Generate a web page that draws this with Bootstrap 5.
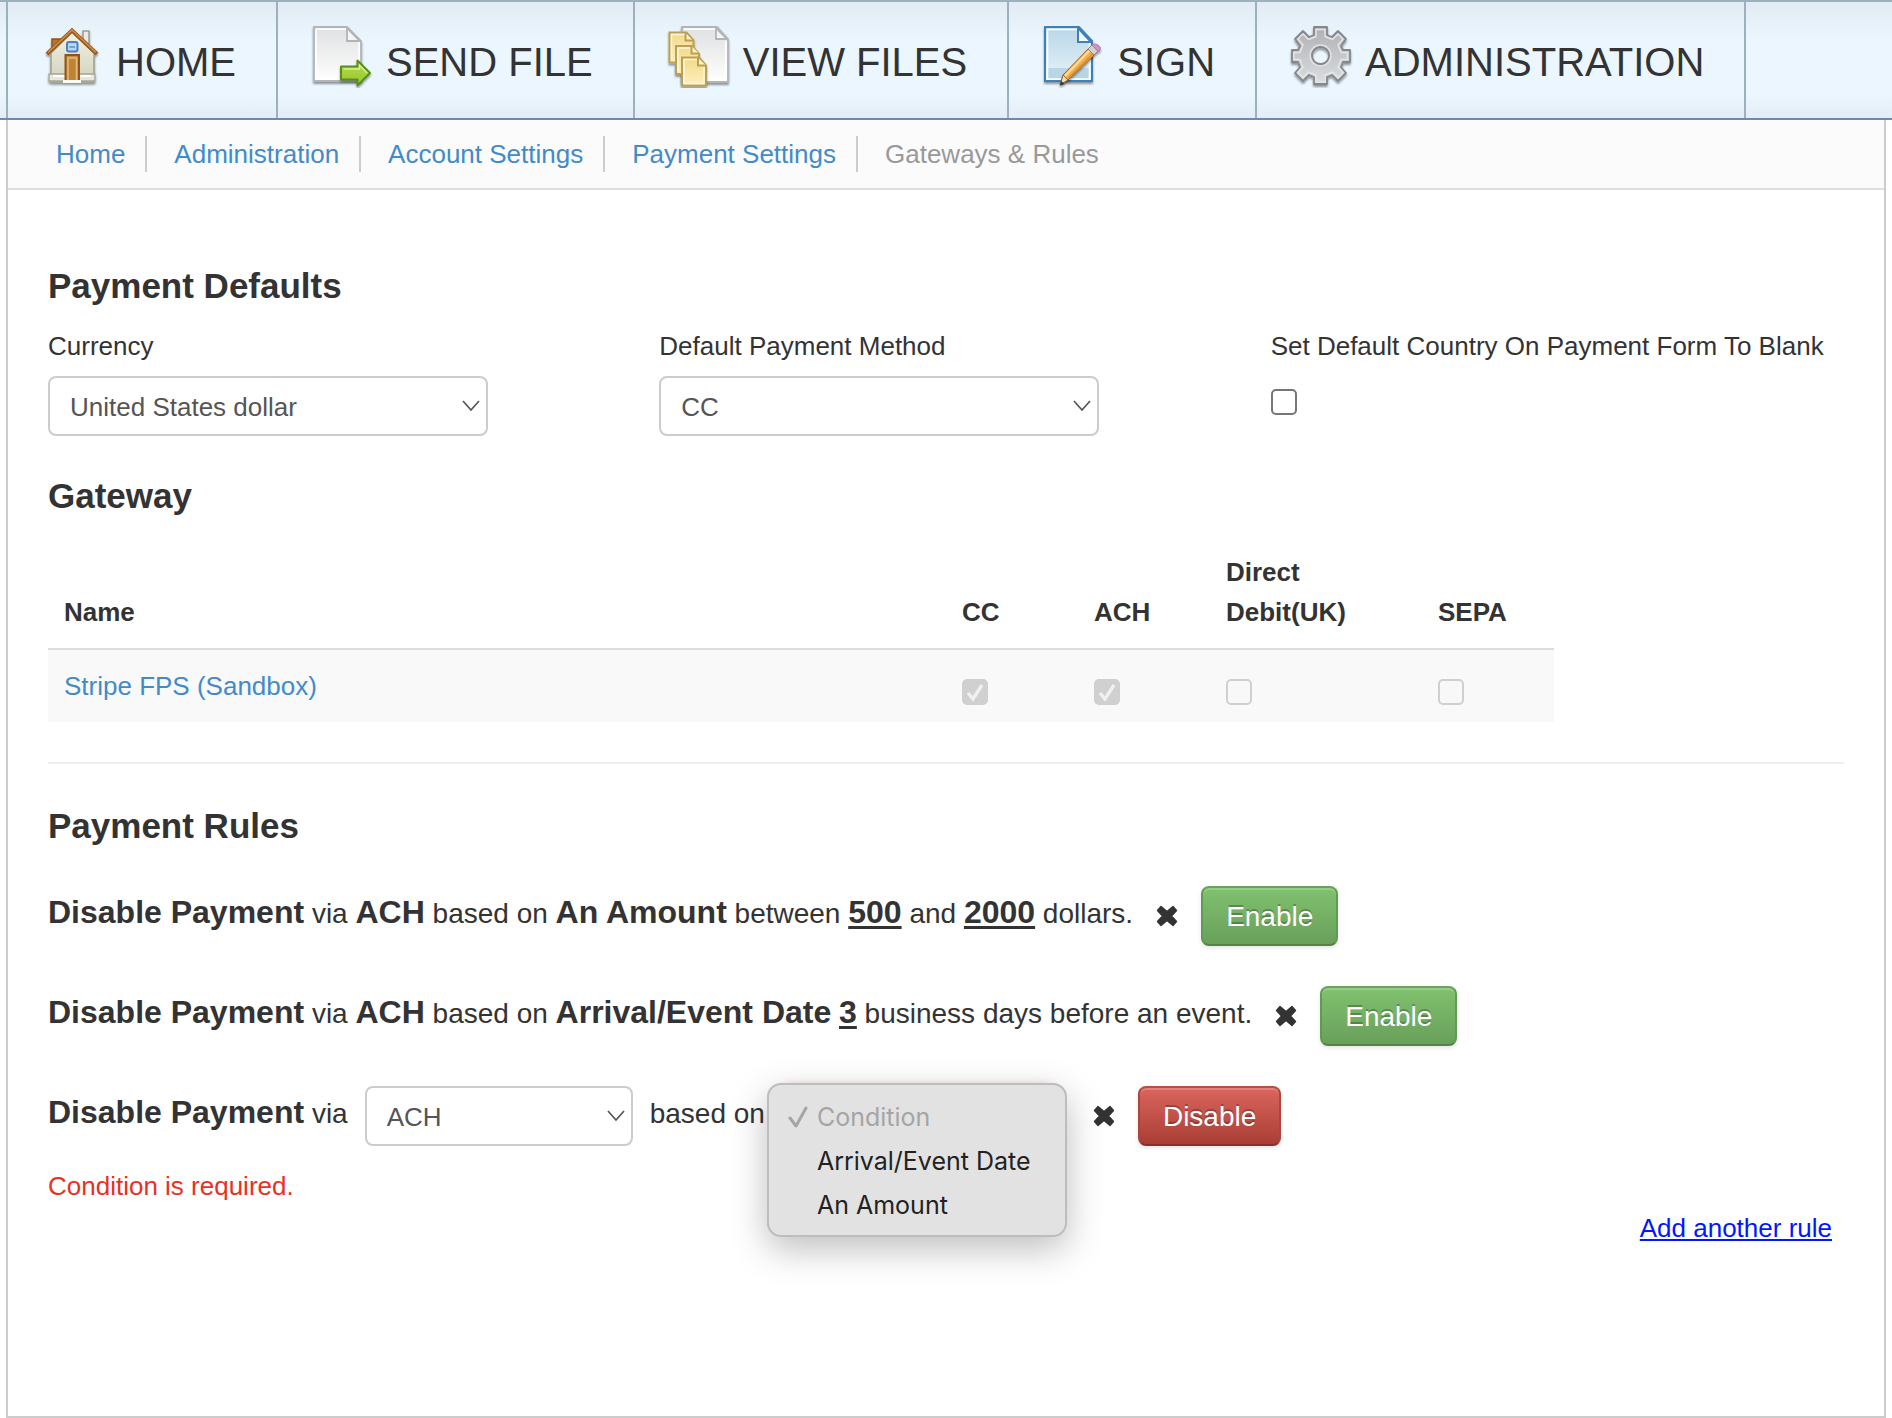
<!DOCTYPE html>
<html lang="en">
<head>
<meta charset="utf-8">
<meta name="viewport" content="width=device-width, initial-scale=1">
<title>Gateways &amp; Rules</title>
<link href="https://cdn.jsdelivr.net/npm/bootstrap@5.3.0/dist/css/bootstrap.min.css" rel="stylesheet">
<style>
  body { font-family: "Liberation Sans", Arial, sans-serif; font-size: 26px; line-height: 40px; color: #333; background: #fff; }
  a { color: #428bca; text-decoration: none; }

  .main-nav { border-top: 2px solid #9db0bd; border-bottom: 2px solid #6d8bb0; padding-left: 6px;
    background: linear-gradient(#e0ebf4 0, #ebf6ff 34%, #ebf6ff 80%, #e2edf5 100%); }
  .main-nav .nav-item { border-right: 2px solid #9db0bd; }
  .main-nav .nav-item:first-child { border-left: 2px solid #9db0bd; }
  .main-nav .nav-link { gap: 12px; padding: 22px 40px 18px 32px; color: #333; font-size: 40px; line-height: 76px; text-transform: uppercase; }
  .main-nav svg { width: 64px; height: 64px; flex: none; }

  .frame { margin: 0 6px; border: 2px solid #ccc; border-top: 0; }
  .crumbs { background: #fbfbfb; border-bottom: 2px solid #ddd; padding: 16px 48px; }
  .crumbs .breadcrumb { --bs-breadcrumb-font-size: 26px; }
  .crumbs .breadcrumb-item { padding: 0 20px 0 0; line-height: 36px; }
  .crumbs .breadcrumb-item + .breadcrumb-item { border-left: 2px solid #ccc; padding-left: 27px; }
  .crumbs .breadcrumb-item + .breadcrumb-item::before { display: none; }
  .crumbs .active { color: #999; }

  .page { padding: 76px 40px 80px; }
  h2 { font-size: 35px; line-height: 40px; font-weight: 700; margin: 0 0 20px; }
  .defaults { --bs-gutter-x: 38px; margin-bottom: 40px; }
  .defaults label { display: block; margin-bottom: 10px; }
  .form-select { height: 60px; padding: 2px 40px 0 20px; border: 2px solid #ccc; border-radius: 8px; color: #555; font-size: 26px; line-height: 54px;
    background-image: url("data:image/svg+xml,%3Csvg xmlns='http://www.w3.org/2000/svg' viewBox='0 0 18 12'%3E%3Cpath d='M1 1l8 9 8-9' fill='none' stroke='%23555' stroke-width='1.700'/%3E%3C/svg%3E");
    background-size: 18px 12px; background-position: right 6px center; }
  .wide-select { width: 440px; max-width: 100%; }
  .form-check-input { display: block; width: 26px; height: 26px; margin: 13px 0 0; border: 2px solid #767676; }
  .form-check-input[type=checkbox] { border-radius: 5px; }
  .form-check-input:disabled { opacity: 1; border-color: #d0d0d0; background-color: #f8f8f8; }
  .form-check-input:checked:disabled { background-color: #d0d0d0; background-size: 26px 26px;
    background-image: url("data:image/svg+xml,%3Csvg xmlns='http://www.w3.org/2000/svg' viewBox='0 0 26 26'%3E%3Cpath d='M6 14l5 6 9-14' fill='none' stroke='%23f0f0f0' stroke-width='3.4'/%3E%3C/svg%3E"); }

  .gateways { width: 84%; max-width: 1506px; margin: 0 0 40px; table-layout: fixed; color: #333; border: 0; }
  .gateways > :not(caption) > * > * { padding: 16px; border: 0; color: #333; background: none; box-shadow: none; }
  .gateways thead th { vertical-align: bottom; border-bottom: 2px solid #ddd; }
  .gateways tbody td { background: #f9f9f9; }
  .gateways .narrow { width: 132px; }
  .gateways .medium { width: 212px; }
  hr.divider { border-top: 2px solid #eee; opacity: 1; margin: 0 0 42px; }

  .rules { padding-top: 20px; font-size: 28px; line-height: 52px; }
  .rule { gap: 23px; margin-bottom: 40px; }
  .rule strong { font-size: 32px; }
  .rule u { text-decoration-thickness: 3px; text-underline-offset: 3px; }
  .rule:last-child { margin-bottom: 20px; }
  .rule-fields { gap: 17px; }
  .method-select { width: 268px; }
  .condition { width: 288px; }
  .condition .form-select { width: 272px; border-color: #e09a96; box-shadow: 0 0 8px #e8b4b0; }
  .condition .dropdown-menu { left: 0; top: -3px; width: 300px; margin-left: -15px; padding: 10px 0 8px; border: 2px solid #bdbdbd; border-radius: 14px; background: #e2e2e2;
    box-shadow: 0 12px 36px rgba(0,0,0,.26); font-family: Inter, sans-serif; font-size: 25px; line-height: 44px; }
  .condition .dropdown-item { padding: 0 16px 0 19px; gap: 8px; color: #222; line-height: 44px; }
  .condition .dropdown-item:disabled { color: #a5a5a5; }
  .condition .tick { width: 21px; height: 24px; flex: none; }
  .remove { padding: 0; border: 0; background: none; line-height: 0; color: #333; }
  .remove svg { width: 22px; height: 22px; }
  .rule .btn { height: 60px; padding: 2px 23px 0; border-width: 2px; border-radius: 8px; font-size: 28px; line-height: 54px; color: #fff;
    text-shadow: 0 -2px 0 rgba(0,0,0,.25); box-shadow: inset 0 2px 0 rgba(255,255,255,.2), 0 2px 4px rgba(0,0,0,.1); }
  .btn-enable { background: linear-gradient(#80c16e, #69a05b); border-color: #68a55a #5f9b52 #528347; }
  .btn-disable { background: linear-gradient(#da655d, #a93e35); border-color: #b84f47 #a8463f #8b3029; }
  .error-text { color: #e8311f; margin: 0 0 2px; }
  .add-rule { padding-right: 12px; }
  .add-rule a { color: #0017ff; text-decoration: underline; text-decoration-thickness: 2px; text-underline-offset: 2px; }
</style>
<script src="https://cdn.jsdelivr.net/npm/bootstrap@5.3.0/dist/js/bootstrap.bundle.min.js"></script>
</head>
<body class="d-flex flex-column min-vh-100">

<svg width="0" height="0" class="position-absolute" aria-hidden="true">
  <defs>
    <linearGradient id="paper" x2="0" y2="1"><stop offset="0" stop-color="#dfe0e1"/><stop offset="1" stop-color="#fff"/></linearGradient>
    <linearGradient id="yellow" x2="0" y2="1"><stop offset="0" stop-color="#f3d989"/><stop offset="1" stop-color="#fdf0c0"/></linearGradient>
    <linearGradient id="blue" x2="0" y2="1"><stop offset="0" stop-color="#b9d6e6"/><stop offset="1" stop-color="#e6f3fb"/></linearGradient>
    <linearGradient id="green" x2="0" y2="1"><stop offset="0" stop-color="#b9dc4c"/><stop offset="1" stop-color="#93c62d"/></linearGradient>
    <linearGradient id="metal" x2="0" y2="1"><stop offset="0" stop-color="#aeb0b3"/><stop offset="1" stop-color="#dcdddf"/></linearGradient>
    <linearGradient id="wall" x2="0" y2="1"><stop offset="0" stop-color="#f3f1e6"/><stop offset="1" stop-color="#cfd2bb"/></linearGradient>
    <filter id="drop" x="-20%" y="-20%" width="140%" height="150%"><feDropShadow dx="0" dy="2" stdDeviation="1.2" flood-opacity=".4"/></filter>
    <symbol id="cross" viewBox="0 0 22 22"><path d="M5 1.500L11 6.500 17 1.500 20.500 5.500 15.500 11 20.500 16.500 17 20.500 11 15.500 5 20.500 1.500 16.500 6.500 11 1.500 5.500z" fill="currentColor" stroke="currentColor" stroke-width="1.400" stroke-linejoin="round"/></symbol>
  </defs>
</svg>

<nav class="main-nav" aria-label="Main">
  <ul class="nav">
    <li class="nav-item"><a class="nav-link d-flex align-items-start" href="#">
      <svg viewBox="0 0 64 64" aria-hidden="true"><g filter="url(#drop)">
        <path d="M12 15h10v14H12z" fill="#b97425" stroke="#8e5417" stroke-width="1.500"/>
        <path d="M43 7h6v18h-6z" fill="#eceadf" stroke="#9b9c90" stroke-width="1.500"/>
        <path d="M32 8L11 29v29h43V29z" fill="url(#wall)" stroke="#9fa08e" stroke-width="1.500"/>
        <path d="M9 50h46v7H9z" fill="#e6e6dc" stroke="#a6a798" stroke-width="1.300"/>
        <path d="M13 52h38" stroke="#fff" stroke-width="2"/>
        <path d="M7 30L32 6.500 57 30" fill="none" stroke="#965a1e" stroke-width="4"/>
        <path d="M8 28.500L32 6 56 28.500" fill="none" stroke="#cf8f45" stroke-width="1.600"/>
        <rect x="27" y="18" width="10.500" height="9.500" rx="2" fill="#b7d7f6" stroke="#4a80c7" stroke-width="2"/>
        <path d="M29.500 23h5.500" stroke="#6ea0dc" stroke-width="2"/>
        <path d="M25.500 57V31h13.500v26z" fill="#c98d3d" stroke="#8f551a" stroke-width="2"/>
        <path d="M28 56V34h8.500V56" fill="#bd8431" stroke="#e5b97b" stroke-width="1.500"/>
        <path d="M23 56h18v3H23z" fill="#fbfbf6"/></g></svg>
      <span>Home</span></a></li>
    <li class="nav-item"><a class="nav-link d-flex align-items-start" href="#">
      <svg viewBox="0 0 64 64" aria-hidden="true"><g filter="url(#drop)">
        <path d="M4 3h33l14 14v40H4z" fill="url(#paper)" stroke="#b2b5b8" stroke-width="1.800"/>
        <path d="M6 5h30M6 5v50h43V18" fill="none" stroke="#fff" stroke-width="1.600"/>
        <path d="M37 4v13h13z" fill="#f4f5f6" stroke="#b2b5b8" stroke-width="1.800"/></g>
        <g filter="url(#drop)"><path d="M31 42.500h16.500v-6L60 49 47.500 61.500v-6H31z" fill="url(#green)" stroke="#568f1d" stroke-width="2" stroke-linejoin="round"/>
        <path d="M33.500 45h16v-4l7.500 8" fill="none" stroke="#d9ef8f" stroke-width="1.400"/></g></svg>
      <span>Send File</span></a></li>
    <li class="nav-item"><a class="nav-link d-flex align-items-start" href="#">
      <svg viewBox="0 0 64 64" aria-hidden="true"><g filter="url(#drop)">
        <path d="M15 3h35l11 12v43H15z" fill="url(#paper)" stroke="#b2b5b8" stroke-width="1.800"/>
        <path d="M17 5h32M59 17v39H17" fill="none" stroke="#fff" stroke-width="1.600"/>
        <path d="M49 4v11h11z" fill="#f4f5f6" stroke="#b2b5b8" stroke-width="1.800"/></g>
        <g fill="url(#yellow)" stroke="#bd9f52" stroke-width="2" filter="url(#drop)">
          <path d="M2.500 8.500h17l7 8v22h-24z"/><path d="M18.500 9v7.500H26" fill="#fdf3cf"/>
          <path d="M9 22h16l7 8v20H9z"/><path d="M24.500 22v7.500H32" fill="#fdf3cf"/>
          <path d="M15 33.500h17l7 8v20H15z"/><path d="M31 34v7.500h8" fill="#fdf3cf"/></g>
        <path d="M4.500 36V10.500h13M11 47V24h12M17 59.500V35.500h13M17 59.500h20V43" fill="none" stroke="#fff8dc" stroke-width="1.400"/></svg>
      <span>View Files</span></a></li>
    <li class="nav-item"><a class="nav-link d-flex align-items-start" href="#">
      <svg viewBox="0 0 64 64" aria-hidden="true"><g filter="url(#drop)">
        <path d="M4 3h34l13 14v40H4z" fill="url(#blue)" stroke="#3f80b8" stroke-width="2"/>
        <path d="M6.500 44H48v11H6.500z" fill="#b7d6e6"/>
        <path d="M6.500 5.500H37M6.500 5.500v49.500h42V19" fill="none" stroke="#fff" stroke-width="1.600"/>
        <path d="M37 4v14h13z" fill="#f3f9fd" stroke="#3f80b8" stroke-width="2"/></g>
        <g filter="url(#drop)"><path d="M19 61l3-10 5 5z" fill="#f4d9ab" stroke="#7c5d34"/>
        <path d="M19 61.500l1.300-4.500 3.200 3z" fill="#333"/>
        <path d="M22 51l26-27 6 6-27 26z" fill="#f6ad4b" stroke="#a7621d"/>
        <path d="M24 52l25-26" stroke="#ffdc9c" stroke-width="2"/><path d="M27 54.500l25-25" stroke="#d98d31" stroke-width="1.400"/>
        <path d="M47 25l4-4 6 6-4 4z" fill="#d0d2d4" stroke="#85878a"/>
        <path d="M51 21c3-3 10 1 8 5l-2 1.500z" fill="#cf94c5" stroke="#b07cab"/></g></svg>
      <span>Sign</span></a></li>
    <li class="nav-item"><a class="nav-link d-flex align-items-start" href="#">
      <svg viewBox="0 0 64 64" aria-hidden="true"><g filter="url(#drop)" stroke-linejoin="round">
        <path fill-rule="evenodd" d="M25 3h13v8l5 2 6-6 8 8-5 7 2 4h7v12h-7l-2 5 5 6-8 8-6-6-5 2v7H25v-7l-5-2-6 6-8-8 5-6-2-5H3V26h6l2-4-5-7 8-8 6 6 5-2zM31.500 23a8.500 8.500 0 1 0 .1 0z" fill="url(#metal)" stroke="#85888b" stroke-width="1.800"/>
        <path d="M27 5.500h9v7l7.500 3 5.500-5.500 5 5-5 6 3 7.500h6.500v7H52l-3 8 5 5-5 5-5.500-5.500-7.500 3V58h-9v-7l-7.500-3-5.500 5.500-5-5 5-5-3-8H5v-7h6l3-7.500-5-6 5-5 5.500 5.500 7.500-3z" fill="none" stroke="#e4e5e6" stroke-width="1.500"/>
        <circle cx="31.500" cy="31.500" r="10.500" fill="none" stroke="#e0e1e3" stroke-width="1.500"/></g></svg>
      <span>Administration</span></a></li>
  </ul>
</nav>

<div class="frame flex-grow-1">
  <nav class="crumbs" aria-label="Breadcrumb">
    <ol class="breadcrumb m-0">
      <li class="breadcrumb-item"><a href="#">Home</a></li>
      <li class="breadcrumb-item"><a href="#">Administration</a></li>
      <li class="breadcrumb-item"><a href="#">Account Settings</a></li>
      <li class="breadcrumb-item"><a href="#">Payment Settings</a></li>
      <li class="breadcrumb-item active" aria-current="page">Gateways &amp; Rules</li>
    </ol>
  </nav>

  <main class="page">
    <h2>Payment Defaults</h2>
    <div class="row defaults">
      <div class="col-4">
        <label for="currency">Currency</label>
        <select id="currency" class="form-select wide-select"><option>United States dollar</option></select>
      </div>
      <div class="col-4">
        <label for="method">Default Payment Method</label>
        <select id="method" class="form-select wide-select"><option>CC</option><option>ACH</option></select>
      </div>
      <div class="col-4 d-flex flex-column">
        <label for="blank-country">Set Default Country On Payment Form To Blank</label>
        <input id="blank-country" class="form-check-input" type="checkbox">
      </div>
    </div>

    <h2>Gateway</h2>
    <table class="table gateways">
      <thead>
        <tr><th scope="col">Name</th><th scope="col" class="narrow">CC</th><th scope="col" class="narrow">ACH</th><th scope="col" class="medium">Direct Debit(UK)</th><th scope="col" class="narrow">SEPA</th></tr>
      </thead>
      <tbody>
        <tr>
          <td><a href="#">Stripe FPS (Sandbox)</a></td>
          <td><input class="form-check-input" type="checkbox" aria-label="CC" checked disabled></td>
          <td><input class="form-check-input" type="checkbox" aria-label="ACH" checked disabled></td>
          <td><input class="form-check-input" type="checkbox" aria-label="Direct Debit(UK)" disabled></td>
          <td><input class="form-check-input" type="checkbox" aria-label="SEPA" disabled></td>
        </tr>
      </tbody>
    </table>

    <hr class="divider">

    <h2>Payment Rules</h2>
    <div class="rules">
      <div class="rule d-flex align-items-start">
        <div><strong>Disable Payment</strong> via <strong>ACH</strong> based on <strong>An Amount</strong> between <strong><u>500</u></strong> and <strong><u>2000</u></strong> dollars.</div>
        <button type="button" class="remove align-self-center" aria-label="Remove rule"><svg aria-hidden="true"><use href="#cross"/></svg></button>
        <button type="button" class="btn btn-enable">Enable</button>
      </div>
      <div class="rule d-flex align-items-start">
        <div><strong>Disable Payment</strong> via <strong>ACH</strong> based on <strong>Arrival/Event Date</strong> <strong><u>3</u></strong> business days before an event.</div>
        <button type="button" class="remove align-self-center" aria-label="Remove rule"><svg aria-hidden="true"><use href="#cross"/></svg></button>
        <button type="button" class="btn btn-enable">Enable</button>
      </div>
      <div class="rule d-flex align-items-start">
        <div class="rule-fields d-flex align-items-start">
          <label for="rule-method" class="align-self-baseline"><strong>Disable Payment</strong> via</label>
          <select id="rule-method" class="form-select method-select"><option>ACH</option><option>CC</option></select>
          <label for="rule-condition" class="align-self-baseline">based on</label>
          <div class="condition position-relative">
            <select id="rule-condition" class="form-select"><option></option></select>
            <div class="dropdown-menu show">
              <button type="button" class="dropdown-item d-flex align-items-center" disabled><svg class="tick" viewBox="0 0 21 24" aria-hidden="true"><path d="M2 13l6 8L18 3" fill="none" stroke="currentColor" stroke-width="3" stroke-linecap="round" stroke-linejoin="round"/></svg>Condition</button>
              <button type="button" class="dropdown-item d-flex"><span class="tick"></span>Arrival/Event Date</button>
              <button type="button" class="dropdown-item d-flex"><span class="tick"></span>An Amount</button>
            </div>
          </div>
        </div>
        <button type="button" class="remove align-self-center" aria-label="Remove rule"><svg aria-hidden="true"><use href="#cross"/></svg></button>
        <button type="button" class="btn btn-disable">Disable</button>
      </div>
    </div>
    <p class="error-text">Condition is required.</p>
    <div class="add-rule text-end"><a href="#">Add another rule</a></div>
  </main>
</div>
</body>
</html>
